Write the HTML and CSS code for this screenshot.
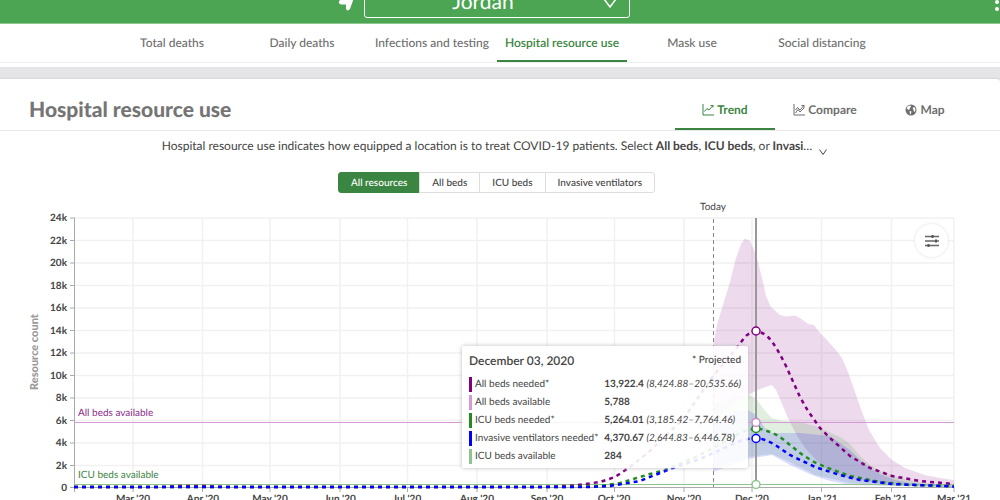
FILE: index.html
```
<!DOCTYPE html>
<html lang="en">
<head>
  <meta charset="UTF-8">
  <meta name="viewport" content="width=device-width, initial-scale=1">
  <title>Hospital resource use - Jordan</title>
  <link rel="stylesheet" href="styles.css">
</head>
<body>
  <header class="topbar">
    <svg class="locate" width="18" height="20" viewBox="0 0 18 20" aria-hidden="true"><path d="M18 1 2 9Q-1 12 3 13.500H8V17.500Q9 21 12 18Z" fill="#fff"/></svg>
    <div class="location">
      <select aria-label="Location">
        <option>Jordan</option>
      </select>
      <svg class="caret" width="14" height="10" viewBox="0 0 14 10" aria-hidden="true"><path d="M1 1 7 9 13 1" fill="none" stroke="#fff" stroke-width="1.500"/></svg>
    </div>
    <button class="kebab" aria-label="Menu"><svg width="4" height="18" viewBox="0 0 4 18"><circle cx="2" cy="2" r="2"/><circle cx="2" cy="9" r="2"/><circle cx="2" cy="16" r="2"/></svg></button>
  </header>

  <nav class="tabs">
    <a href="#deaths">Total deaths</a>
    <a href="#daily">Daily deaths</a>
    <a href="#infections">Infections and testing</a>
    <a href="#hospital" class="active">Hospital resource use</a>
    <a href="#mask">Mask use</a>
    <a href="#social">Social distancing</a>
  </nav>

  <main class="card">
    <div class="card-head">
      <h1>Hospital resource use</h1>
      <div class="views">
        <a href="#trend" class="active">
          <svg width="12" height="12" viewBox="0 0 12 12" aria-hidden="true"><path d="M1 0V11H12M2.500 7.500 5 4.500 7 6 11 1.500M8.500 1.500H11V3.500" fill="none" stroke="currentColor"/></svg>
          Trend
        </a>
        <a href="#compare">
          <svg width="12" height="12" viewBox="0 0 12 12" aria-hidden="true"><path d="M1 0V11H12M2.500 6 4.500 3.500 7 6 11 1.500M2.500 9 5 5.500 7 8 11 4M8.500 1.500H11V4" fill="none" stroke="currentColor"/></svg>
          Compare
        </a>
        <a href="#map">
          <svg width="12" height="12" viewBox="0 0 12 12" aria-hidden="true"><circle cx="6" cy="6" r="5.500" fill="currentColor"/><path d="M1.500 4 3 2 5.500 1.500 6 3 4.500 4 5 5 3.500 6ZM4.500 7 6.500 7.500 6 9.500 5 10.500ZM7.500 4 9.500 3 10.500 5 10 8 8.500 7 8.500 5.500Z" fill="#fff"/></svg>
          Map
        </a>
      </div>
    </div>

    <div class="intro">
      <p>Hospital resource use indicates how equipped a location is to treat COVID-19 patients. Select <b>All beds</b>, <b>ICU beds</b>, or <b>Invasi</b>…</p>
      <button aria-label="Show more"><svg width="8" height="7" viewBox="0 0 8 7"><path d="M.5.5 4 5.500 7.500.5" fill="none" stroke="#444"/></svg></button>
    </div>

    <div class="segments">
      <button class="active">All resources</button>
      <button>All beds</button>
      <button>ICU beds</button>
      <button>Invasive ventilators</button>
    </div>

    <div class="chart">
      <svg class="plot" viewBox="0 195 1000 305">
        <path class="grid" d="M75 218H954M75 240.500H954M75 263H954M75 285.500H954M75 308H954M75 330.500H954M75 353H954M75 375.500H954M75 398H954M75 420.500H954M75 443H954M75 465.500H954"/>
        <path class="grid" d="M133 218V487M202.500 218V487M270 218V487M340 218V487M407.500 218V487M477 218V487M547 218V487M614.500 218V487M684 218V487M752 218V487M821.500 218V487M891.500 218V487M954 218V487"/>
        <path class="axis" d="M74.500 218V492M74 487.500H954.500"/>
        <path class="ticks" d="M70 218H75M70 240.500H75M70 263H75M70 285.500H75M70 308H75M70 330.500H75M70 353H75M70 375.500H75M70 398H75M70 420.500H75M70 443H75M70 465.500H75M70 487.500H75M133 488V492M202.500 488V492M270 488V492M340 488V492M407.500 488V492M477 488V492M547 488V492M614.500 488V492M684 488V492M752 488V492M821.500 488V492M891.500 488V492M954 488V492"/>

        <!-- uncertainty bands -->
        <path class="band-beds" d="M713 346 717 325 722 308 730 282 736 258 741 244 745 238.500 750 241 754 250 758 262 762 278 766 296 771 307 780 315 786 316.500 795 315.500 800 318 808 324 814 325 820 333 826 339 835 349 842 358 848 372 855 392 862 412 869 430 880 448 892 460 905 468 925 475 940 478 954 480V487L892 485 850 479 823 467 805 448 796 434 787 416 780 399 776 390 772 385 760 389 745 396 713 420Z"/>
        <path class="band-icu" d="M713 405 740 396 750 395 757 400 766 412 772 418 782 421 800 422 815 426 825 430 842 438 850 444 860 456 870 465 880 471 900 478 925 483 954 485V487L892 486 850 483 815 475 790 462 772 454 748 457 713 469Z"/>
        <path class="band-vent" d="M713 424 735 411 748 410 756 415 765 428 772 433 800 433 830 436 840 443 850 450 860 460 870 468 880 474 895 480 910 483 954 486V487L850 485 830 481 812 475 790 465 772 455 748 459 713 472Z"/>

        <path class="beds-available" d="M75 422.500H954"/>
        <path class="icu-available" d="M75 484.500H954"/>
        <path class="today" d="M713.500 219V487"/>

        <path class="line beds" d="M74 487H160L180 486 205 486 225 487H540L575 485.500 600 482 615 477 630 467 650 451 684 418 713 376 735 350 745 337C751 330 761 330 768 337 774 343 780 354 786 366L800 397 808 411 820 428 830 438 850 456 870 468 892 476 920 481 954 484"/>
        <path class="line icu" d="M74 487H570L600 486 620 483 650 474 665 470 700 455 740 433C750 429 758 427 767 431 775 433 782 438 790 445L800 453 812 461 825 467 850 476 880 482 910 485 954 486"/>
        <path class="line vent" d="M74 487H590L610 486 640 481 655 475 670 469 700 459 740 441C750 438 757 437 765 440 774 443 782 450 790 455L815 467 840 475 860 480 892 484 954 486.500"/>

        <path class="cursor" d="M756 218V487"/>
        <circle class="dot beds" cx="756" cy="331" r="4"/>
        <circle class="dot icu" cx="756" cy="428.500" r="4"/>
        <circle class="dot beds-free" cx="756" cy="422.500" r="4"/>
        <circle class="dot vent" cx="756" cy="438.500" r="4"/>
        <circle class="dot icu-free" cx="756" cy="484.500" r="4"/>

        <g class="y-labels">
          <text x="67" y="221">24k</text>
          <text x="67" y="244">22k</text>
          <text x="67" y="266">20k</text>
          <text x="67" y="289">18k</text>
          <text x="67" y="311">16k</text>
          <text x="67" y="334">14k</text>
          <text x="67" y="356">12k</text>
          <text x="67" y="379">10k</text>
          <text x="67" y="401">8k</text>
          <text x="67" y="424">6k</text>
          <text x="67" y="446">4k</text>
          <text x="67" y="469">2k</text>
          <text x="67" y="491">0</text>
        </g>
        <g class="x-labels">
          <text x="133" y="502">Mar '20</text>
          <text x="203" y="502">Apr '20</text>
          <text x="270" y="502">May '20</text>
          <text x="340" y="502">Jun '20</text>
          <text x="407" y="502">Jul '20</text>
          <text x="477" y="502">Aug '20</text>
          <text x="547" y="502">Sep '20</text>
          <text x="614" y="502">Oct '20</text>
          <text x="684" y="502">Nov '20</text>
          <text x="752" y="502">Dec '20</text>
          <text x="822" y="502">Jan '21</text>
          <text x="891" y="502">Feb '21</text>
          <text x="954" y="502">Mar '21</text>
        </g>
        <text class="axis-title" transform="translate(38 352) rotate(-90)">Resource count</text>
        <text class="today-label" x="713" y="210">Today</text>
        <text class="beds-label" x="78" y="416">All beds available</text>
        <text class="icu-label" x="78" y="478">ICU beds available</text>
      </svg>

      <button class="settings" aria-label="Chart settings">
        <svg width="14" height="12" viewBox="0 0 14 12"><path d="M0 1.500H14M0 6H14M0 10.500H14" stroke="#666" stroke-width="1.500"/><path d="M7.500 0V3M11 4.500V7.500M3.500 9V12" stroke="#555" stroke-width="2"/></svg>
      </button>

      <div class="tooltip">
        <div class="tooltip-head">
          <strong>December 03, 2020</strong>
          <span>* Projected</span>
        </div>
        <table>
          <tr><th class="key-beds"><span>All beds needed*</span></th><td><b>13,922.4</b> <i>(8,424.88–20,535.66)</i></td></tr>
          <tr><th class="key-beds-free"><span>All beds available</span></th><td><b>5,788</b></td></tr>
          <tr><th class="key-icu"><span>ICU beds needed*</span></th><td><b>5,264.01</b> <i>(3,185.42–7,764.46)</i></td></tr>
          <tr><th class="key-vent"><span>Invasive ventilators needed*</span></th><td><b>4,370.67</b> <i>(2,644.83–6,446.78)</i></td></tr>
          <tr><th class="key-icu-free"><span>ICU beds available</span></th><td><b>284</b></td></tr>
        </table>
      </div>
    </div>
  </main>
</body>
</html>
```
FILE: styles.css
```
* { box-sizing: border-box; }
body { margin: 0; background: #e5e5e7; color: #444; font-family: Lato, sans-serif; font-size: 12px; text-rendering: geometricPrecision; overflow-x: hidden; }
button, select { font-family: inherit; text-rendering: inherit; margin: 0; padding: 0; cursor: pointer; }
a { text-decoration: none; color: inherit; }
svg { display: block; }

/* top bar */
.topbar { position: relative; display: grid; grid-template-columns: 1fr 266px 1fr; align-content: end; align-items: end; height: 24px; padding: 0 6px 5px 0; overflow: hidden; background: #4ca553; border-bottom: 1px solid #8cc791; }
.locate { justify-self: end; margin: 0 8px 7px 0; }
.location { position: relative; }
.location select { display: block; width: 100%; height: 34px; appearance: none; background: transparent; border: 1px solid #fff; border-radius: 3px; color: #fff; font-size: 21px; text-align: center; text-align-last: center; padding-right: 28px; }
.caret { position: absolute; right: 13px; bottom: 10px; pointer-events: none; }
.kebab { position: absolute; right: 1px; bottom: 12px; border: 0; background: none; fill: #fff; }

/* section tabs */
.tabs { display: flex; justify-content: center; height: 43px; padding-right: 6px; background: linear-gradient(#f0f0f0, #f0f0f0) 0 38px / 100% 1px no-repeat #fff; }
.tabs a { width: 130px; height: 38px; line-height: 37px; text-align: center; color: #6e6e6e; font-weight: 500; white-space: nowrap; }
.tabs .active { color: #3b8542; border-bottom: 2px solid #3b8542; font-weight: 600; }

.card { margin-top: 12px; background: #fff; box-shadow: 0 0 2px #bbb; border-top-right-radius: 3px; }
.card-head { display: flex; justify-content: space-between; height: 52px; padding: 0 25px 0 29px; border-bottom: 1px solid #e8e8e8; }
h1 { margin: 0; color: #757575; font-size: 21px; line-height: 61px; font-weight: 900; }
.views { display: flex; }
.views a { display: flex; justify-content: center; align-items: center; gap: 3px; width: 100px; padding-top: 12px; border-bottom: 2px solid transparent; color: #6e6e6e; font-weight: 700; }
.views .active { color: #3b8542; border-color: #3b8542; }

.intro { display: flex; justify-content: center; gap: 7px; height: 41px; padding: 6px 11px 0 0; }
.intro p { margin: 0; line-height: 18px; white-space: nowrap; }
.intro button { height: 20px; padding-top: 10px; border: 0; background: none; }

.segments { display: flex; justify-content: center; padding-right: 6px; }
.segments button { height: 21px; padding: 0 12px; margin-left: -1px; background: #fff; border: 1px solid #ddd; color: #444; font-size: 10px; font-weight: 500; }
.segments button:first-child { border-radius: 3px 0 0 3px; }
.segments button:last-child { border-radius: 0 3px 3px 0; }
.segments .active { background: #3b8542; border-color: #3b8542; color: #fff; }

/* chart */
.chart { position: relative; margin-top: 2px; }
.plot { width: 100%; height: auto; font-size: 10px; }
.plot path { fill: none; }
.plot .grid { stroke: #f1f1f1; stroke-width: 1.5; }
.plot .axis { stroke: #aaa; }
.plot .ticks { stroke: #aaa; }
.plot .band-beds { fill: rgba(128, 0, 128, 0.14); }
.plot .band-icu { fill: rgba(34, 139, 34, 0.14); }
.plot .band-vent { fill: rgba(0, 0, 255, 0.14); }
.plot .beds-available { stroke: #d59ad5; }
.plot .icu-available { stroke: #8fc48f; }
.plot .today { stroke: #888; stroke-dasharray: 4 3; }
.plot .cursor { stroke: #999; stroke-width: 2; }
.line { stroke-width: 2.5; stroke-dasharray: 4 4; }
.beds { stroke: #800080; }
.icu { stroke: #228b22; }
.vent { stroke: #0000ff; }
.beds-free { stroke: #c98bc9; }
.icu-free { stroke: #8fc48f; }
.dot { fill: #fff; stroke-width: 1.5; }
.plot text { fill: #444; }
.y-labels { text-anchor: end; font-weight: 700; }
.x-labels { text-anchor: middle; font-weight: 700; }
.plot .axis-title { fill: #999; text-anchor: middle; font-size: 11px; font-weight: 900; }
.plot .today-label { text-anchor: middle; }
.plot .beds-label { fill: #8b2a8b; }
.plot .icu-label { fill: #3b8542; }

.settings { position: absolute; top: 29px; right: 52px; display: grid; place-items: center; width: 33px; height: 33px; border: 0; border-radius: 50%; background: #fff; box-shadow: 0 0 3px #ddd; }

.tooltip { position: absolute; top: 151px; left: 46.2%; width: 286px; padding: 5px 7px 3px; background: rgba(255, 255, 255, 0.9); border-radius: 2px; box-shadow: 0 0 4px #bbb; font-size: 10px; white-space: nowrap; }
.tooltip-head { display: flex; justify-content: space-between; align-items: center; height: 18px; margin-bottom: 6px; }
.tooltip-head strong { font-size: 12px; font-weight: 600; }
.tooltip-head span { font-weight: 500; }
.tooltip table { width: 100%; border-collapse: collapse; }
.tooltip tr { height: 18px; }
.tooltip th, .tooltip td { padding: 0; text-align: left; font-weight: 400; }
.tooltip th { width: 136px; }
.tooltip th span { display: block; height: 15px; line-height: 15px; padding-left: 3px; border-left: 3px solid; }
.tooltip th span { border-color: inherit; }
.key-beds { border-color: #800080; }
.key-beds-free { border-color: #d59ad5; }
.key-icu { border-color: #228b22; }
.key-vent { border-color: #0000ff; }
.key-icu-free { border-color: #8fc48f; }
```
